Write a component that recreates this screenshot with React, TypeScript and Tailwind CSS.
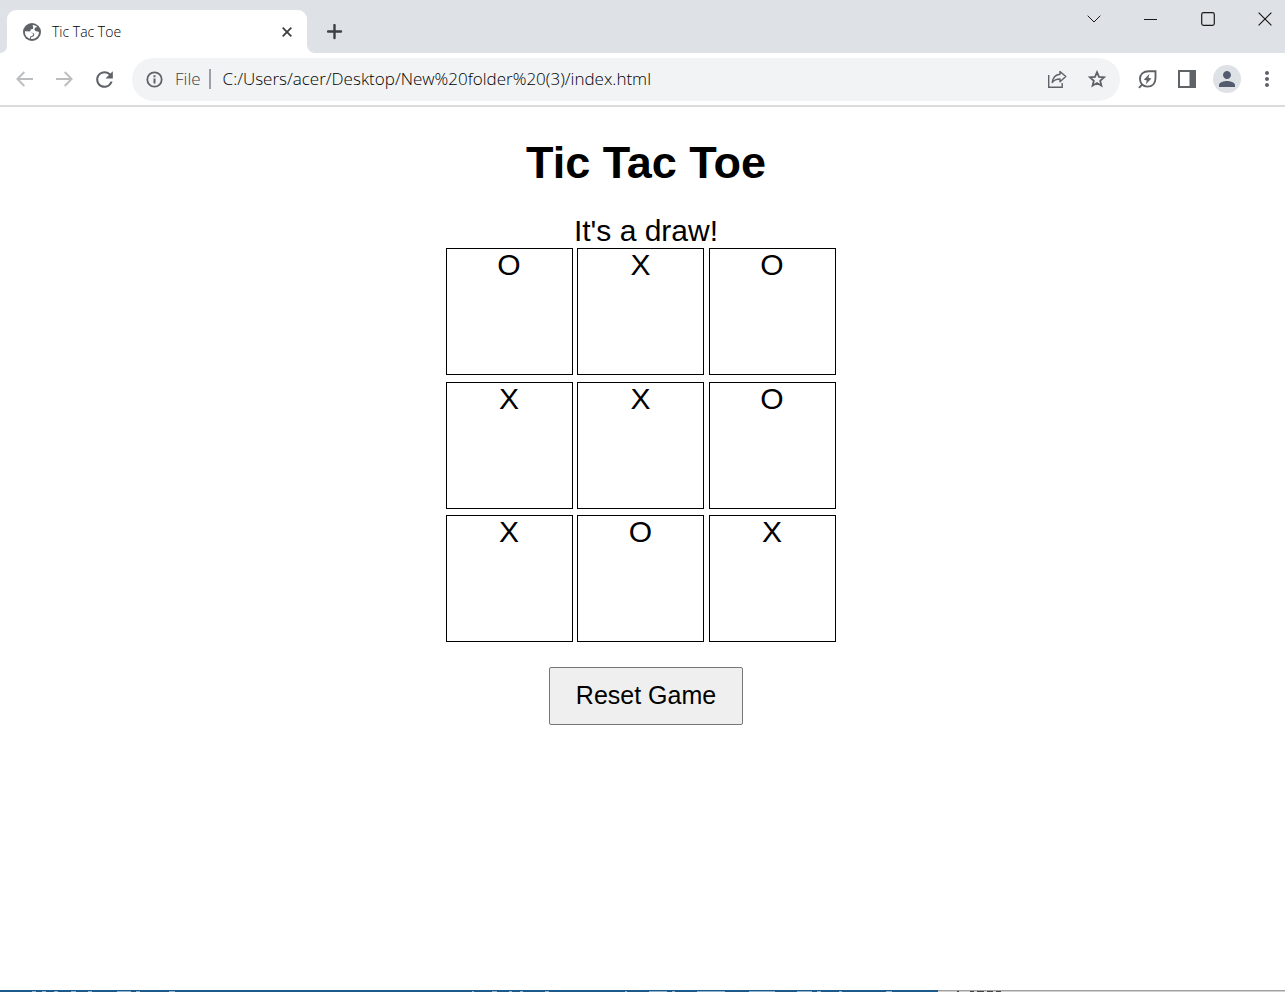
import { useState } from "react";
import { MdRefresh, MdPerson, MdMoreVert } from "react-icons/md";

type Mark = "X" | "O" | "";

const LINES = [
  [0, 1, 2], [3, 4, 5], [6, 7, 8],
  [0, 3, 6], [1, 4, 7], [2, 5, 8],
  [0, 4, 8], [2, 4, 6],
];

function statusOf(board: Mark[]): string {
  for (const [a, b, c] of LINES) {
    if (board[a] && board[a] === board[b] && board[a] === board[c]) return `${board[a]} wins!`;
  }
  if (board.every(Boolean)) return "It's a draw!";
  return "";
}

function TitleBar() {
  return (
    <header className="flex h-[53px] bg-[#dee1e6]">
      <div className="flex w-[7px] items-end overflow-hidden bg-white">
        <div className="h-full w-full rounded-br-lg bg-[#dee1e6]" />
      </div>
      <div className="mt-[10px] flex w-[300px] items-center rounded-t-[9px] bg-white pr-3 pl-4">
        <svg width="18" height="18" viewBox="0 0 18 18">
          <circle cx="9" cy="9" r="9" fill="#5f6368" />
          <path
            fill="#fff"
            d="M9.500 2c2 0 3.700.8 4.900 2L12.300 4.600 11.300 6.400l1 1.700 2.200.3 1.500.6c0 3.900-3.100 7-7 7l-1-.2v-1.600l2.300-.6 1-1.600-.6-1.700-2.200-.8H5.300L2.100 8.100 2 9c0 2 .8 3.700 2 5L6.500 12 5 9.800 2.100 8.200l3.600.6 1.600-.5.4-1.900 2.400-.7V3.800z"
          />
          <path fill="#fff" d="M2 8.600l3.500 0 3 .9 1.800 1.400-.8 1.800-2.300.9-.2 2.200C4.200 15 2 12.300 2 8.600z" />
        </svg>
        <span className="ml-[11px] flex-1 font-['Open_Sans',sans-serif] text-[14px] font-light text-black">
          Tic Tac Toe
        </span>
        <button aria-label="Close tab" className="flex size-4 items-center justify-center text-[#3c4043]">
          <svg width="10" height="10" viewBox="0 0 10 10" stroke="currentColor" strokeWidth="1.8">
            <path d="M.7.7l8.6 8.6M9.3.7L.7 9.3" />
          </svg>
        </button>
      </div>
      <div className="w-3 bg-white">
        <div className="h-full rounded-bl-lg bg-[#dee1e6]" />
      </div>
      <button aria-label="New tab" className="mt-[10px] flex w-[31px] items-center justify-center text-[#3c4043]">
        <svg width="16" height="16" viewBox="0 0 16 16" stroke="currentColor" strokeWidth="2.4">
          <path d="M7.500 1v13M1 7.500h13" strokeLinecap="round" />
        </svg>
      </button>
      <div className="ml-auto flex h-[38px] items-center text-[#1b1b1b]">
        <button aria-label="Search tabs" className="flex w-[57px] justify-center">
          <svg width="14" height="8" viewBox="0 0 14 8" fill="none" stroke="currentColor">
            <path d="M.7.7L7 7 13.3.7" />
          </svg>
        </button>
        <button aria-label="Minimize" className="flex w-[56px] justify-center">
          <svg width="13" height="13" viewBox="0 0 13 13" stroke="currentColor">
            <path d="M0 6.500h13" />
          </svg>
        </button>
        <button aria-label="Maximize" className="flex w-[59px] justify-center">
          <svg width="14" height="14" viewBox="0 0 14 14" fill="none" stroke="currentColor" strokeWidth="1.2">
            <rect x=".7" y=".7" width="12.6" height="12.6" rx="1.8" />
          </svg>
        </button>
        <button aria-label="Close window" className="flex w-12 justify-center pl-2">
          <svg width="14" height="14" viewBox="0 0 14 14" stroke="currentColor" strokeWidth="1.2">
            <path d="M.6.6l12.8 12.8M13.4.6L.6 13.4" />
          </svg>
        </button>
      </div>
    </header>
  );
}

function Toolbar() {
  return (
    <nav className="flex h-[54px] items-center border-b-2 border-[#dadbdd] bg-white pr-[7px] pl-1 text-[#5f6368]">
      <button aria-label="Back" className="flex w-10 justify-center text-[#bbbdbf]">
        <svg width="17" height="16" viewBox="0 0 17 16" fill="none" stroke="currentColor" strokeWidth="1.9">
          <path d="M17 8H1.5M8.3 1L1.4 8l6.9 7" />
        </svg>
      </button>
      <button aria-label="Forward" className="flex w-10 justify-center text-[#bbbdbf]">
        <svg width="17" height="16" viewBox="0 0 17 16" fill="none" stroke="currentColor" strokeWidth="1.9">
          <path d="M0 8h15.5M8.7 1l6.9 7-6.9 7" />
        </svg>
      </button>
      <button aria-label="Reload" className="flex w-10 justify-center">
        <MdRefresh size={25} />
      </button>
      <div className="ml-2 flex h-[43px] flex-1 items-center rounded-full bg-[#f1f3f4] px-[14px] font-['Open_Sans',sans-serif] text-[17px] font-light">
        <svg width="17" height="17" viewBox="0 0 17 17" fill="none" stroke="currentColor" strokeWidth="2">
          <circle cx="8.500" cy="8.500" r="7.200" strokeWidth="1.800" />
          <path d="M8.500 7.500v5M8.500 4.300v2" />
        </svg>
        <label htmlFor="address" className="ml-3 text-[#3c4043]">File</label>
        <span className="mx-2 h-5 w-[2px] bg-[#9aa0a6]" />
        <input
          id="address"
          className="ml-1 min-w-0 flex-1 bg-transparent text-black outline-none"
          defaultValue="C:/Users/acer/Desktop/New%20folder%20(3)/index.html"
        />
        <button aria-label="Share" className="flex w-10 justify-center">
          <svg width="20" height="18" viewBox="0 0 20 18" fill="none" stroke="currentColor" strokeWidth="1.4">
            <path d="M1.700 5v12.200h13.500V13" />
            <path d="M13 1.400l5.800 5.200-5.800 5.200V9C9.200 9 7 10 5.200 12.500 5.800 8 8.400 4.700 13 4.200z" strokeLinejoin="round" />
          </svg>
        </button>
        <button aria-label="Bookmark" className="-mr-[11px] flex w-10 justify-center">
          <svg width="18" height="18" viewBox="0 0 18 18" fill="none" stroke="currentColor" strokeWidth="1.800">
            <path d="M9 2.200l2 4.700 5.100.4-3.900 3.400 1.200 5L9 13l-4.400 2.700 1.200-5L1.900 7.300 7 6.900z" />
          </svg>
        </button>
      </div>
      <button aria-label="Energy saver" className="ml-[7px] flex w-10 justify-center">
        <svg width="19" height="19" viewBox="0 0 19 19" fill="none" stroke="currentColor" strokeWidth="1.9">
          <path d="M17.500 1.200H11C5 1.200 2 4.500 2 9c0 4.500 3 7.600 7.300 7.600 5 0 8.200-3.300 8.200-8.600zM4.500 14.200L1 17.800" />
          <path d="M11.500 3.800L5.800 9.700l3 .7-1.100 4 5.700-5.900-3-.7z" fill="currentColor" stroke="none" />
        </svg>
      </button>
      <button aria-label="Side panel" className="flex w-10 justify-center">
        <svg width="18" height="18" viewBox="0 0 18 18">
          <path fill="currentColor" fillRule="evenodd" d="M0 0h18v18H0zM2 2v14h9.500V2z" />
        </svg>
      </button>
      <button aria-label="Profile" className="flex w-10 justify-center">
        <span className="flex size-7 items-center justify-center rounded-full bg-[#dee1e6] text-[#525c6e]">
          <MdPerson size={24} />
        </span>
      </button>
      <button aria-label="Menu" className="-mr-[9px] flex w-10 justify-center">
        <MdMoreVert size={24} />
      </button>
    </nav>
  );
}

function Game() {
  const [board, setBoard] = useState<Mark[]>(["O", "X", "O", "X", "X", "O", "X", "O", "X"]);
  const status = statusOf(board);

  const play = (index: number) => {
    if (board[index] || status) return;
    const turn: Mark = board.filter(Boolean).length % 2 === 0 ? "X" : "O";
    setBoard(board.map((mark, i) => (i === index ? turn : mark)));
  };

  return (
    <main className="flex flex-1 flex-col items-center pt-[30px] pl-[7px] font-['Liberation_Sans',Arial,sans-serif] text-black">
      <h1 className="text-[45px] leading-[52px] font-bold">Tic Tac Toe</h1>
      <p className="mt-[25px] h-[34px] text-[30px] leading-[34px]">{status}</p>
      <div className="mr-[11px] grid h-[394px] w-[390px] grid-cols-[repeat(3,127px)] content-between justify-between">
        {board.map((mark, i) => (
          <button
            key={i}
            aria-label={`Cell ${i + 1} ${mark}`}
            onClick={() => play(i)}
            className="flex h-[127px] items-start justify-center border border-black text-[30px] leading-[32px]"
          >
            {mark}
          </button>
        ))}
      </div>
      <button
        onClick={() => setBoard(Array<Mark>(9).fill(""))}
        className="mt-[25px] h-[58px] rounded-[2px] border border-[#767676] bg-[#efefef] px-[26px] text-[25px]"
      >
        Reset Game
      </button>
    </main>
  );
}

function DesktopEdge() {
  return (
    <footer className="flex h-[2px]">
      <div className="w-[73%] bg-[#1c5a8c]">
        <svg width="100%" height="2" stroke="#8fb0cb" strokeWidth="1">
          <path d="M32 1.500h4m6 0h4m8 0h4m13 0h5m12 0h4m25 0h14m5 0h4m29 0h6M472 1.500h2m18 0h5m12 0h3m8 0h3m22 0h4m76 0h2m22 0h18m5 0h3m22 0h28m24 0h26m22 0h15m5 0h4m18 0h3m44 0h6" />
        </svg>
      </div>
      <div className="flex-1 border-t border-[#a0a0a0] bg-[#d0d0d0]">
        <svg width="100%" height="1" stroke="#444" strokeWidth="1">
          <path d="M19 .5h2m11 0h4m3 0h7m3 0h6m3 0h5" />
        </svg>
      </div>
    </footer>
  );
}

export default function App() {
  return (
    <div className="flex min-h-screen flex-col bg-white">
      <TitleBar />
      <Toolbar />
      <Game />
      <DesktopEdge />
    </div>
  );
}
